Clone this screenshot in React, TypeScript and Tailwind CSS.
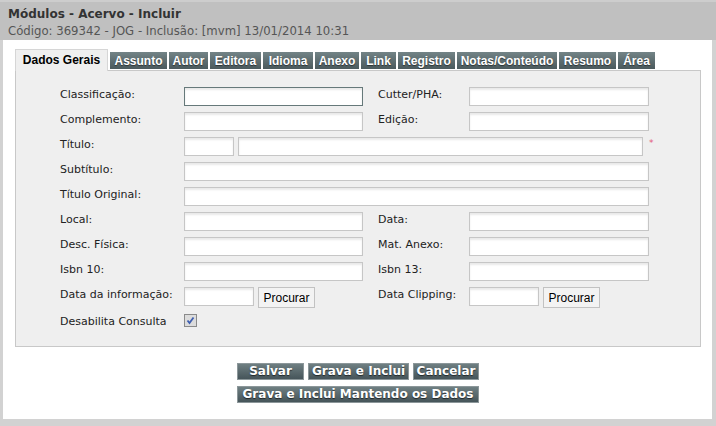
import React from "react";

const tabs = [
  { label: "Assunto", w: "w-[57px]" },
  { label: "Autor", w: "w-[39px]" },
  { label: "Editora", w: "w-[51px]" },
  { label: "Idioma", w: "w-[50px]" },
  { label: "Anexo", w: "w-[44px]" },
  { label: "Link", w: "w-[35px]" },
  { label: "Registro", w: "w-[57px]" },
  { label: "Notas/Conteúdo", w: "w-[100px]" },
  { label: "Resumo", w: "w-[57px]" },
  { label: "Área", w: "w-[37px]" },
];

const inputCls =
  "h-[19px] border bg-white shadow-[inset_0_2px_2px_rgba(0,0,0,0.09)] outline-none";

const Label = ({ children, w = "w-[124px]" }: { children: React.ReactNode; w?: string }) => (
  <span className={`${w} block shrink-0 pt-[1px] leading-[13px] text-[11px] text-[#222]`}>{children}</span>
);

const TwoCol = ({ a, b, focus }: { a: string; b: string; focus?: boolean }) => (
  <div className="flex items-start">
    <Label>{a}</Label>
    <input
      type="text"
      className={`${inputCls} w-[179px] ${focus ? "border-[#66797a]" : "border-[#c6c6c6]"}`}
    />
    <Label w="ml-[15px] w-[91px]">{b}</Label>
    <input type="text" className={`${inputCls} w-[180px] border-[#c6c6c6]`} />
  </div>
);

const FullRow = ({ a }: { a: string }) => (
  <div className="flex items-start">
    <Label>{a}</Label>
    <input type="text" className={`${inputCls} w-[465px] border-[#c6c6c6]`} />
  </div>
);

const Procurar = () => (
  <button className="ml-[4px] h-[21px] w-[57px] shrink-0 border border-[#c2c2c2] bg-[#f3f3f3] font-['Liberation_Sans',Arial,sans-serif] text-[12px] text-black">
    Procurar
  </button>
);

const DarkButton = ({ children, w }: { children: React.ReactNode; w: string }) => (
  <button
    className={`${w} h-[17px] border border-[#8c979a] bg-gradient-to-b from-[#6f7f82] to-[#46555a] text-[12px] font-bold leading-[15px] text-white [text-shadow:0_1px_1px_rgba(0,0,0,0.6)]`}
  >
    {children}
  </button>
);

export default function App() {
  return (
    <div className="flex h-[426px] w-[716px] flex-col bg-[#d2d2d2] font-['DejaVu_Sans',Verdana,sans-serif]">
      {/* Header */}
      <div className="h-[40px] shrink-0 border-t-2 border-[#cdcdcd] bg-[#c0c0c0] px-2 pt-[4px]">
        <div className="text-[12px] font-bold leading-[17px] text-[#333]">Módulos - Acervo - Incluir</div>
        <div className="text-[11.7px] leading-[17px] text-[#555]">
          Código: 369342 - JOG - Inclusão: [mvm] 13/01/2014 10:31
        </div>
      </div>

      {/* Body */}
      <div className="mb-[7px] ml-[3px] mr-[4px] flex-1 bg-white pl-[12px] pt-[9px]">
        {/* Tabs */}
        <div className="flex items-end gap-[2px]">
          <div className="relative z-10 -mb-px flex h-[22px] w-[93px] items-start justify-center border border-b-0 border-[#d6d6d6] bg-[#efefef] pt-[3px] font-['Liberation_Sans',Arial,sans-serif] text-[12px] font-bold leading-[15px] text-black">
            Dados Gerais
          </div>
          {tabs.map((t) => (
            <div
              key={t.label}
              className={`${t.w} mb-px flex h-[17px] items-center justify-center bg-gradient-to-b from-[#738487] to-[#4b5a5d] font-['Liberation_Sans',Arial,sans-serif] text-[12px] font-bold text-white [text-shadow:0_1px_1px_rgba(0,0,0,0.5)]`}
            >
              {t.label}
            </div>
          ))}
        </div>

        {/* Panel */}
        <div className="flex w-[686px] flex-col gap-[6px] border border-[#c8c8c8] bg-[#efefef] pb-[18px] pl-[44px] pt-[16px]">
          <TwoCol a="Classificação:" b="Cutter/PHA:" focus />
          <TwoCol a="Complemento:" b="Edição:" />
          <div className="flex items-start">
            <Label>Título:</Label>
            <input type="text" className={`${inputCls} w-[50px] border-[#c6c6c6]`} />
            <input type="text" className={`${inputCls} ml-[4px] w-[405px] border-[#c6c6c6]`} />
            <span className="ml-[6px] mt-[2px] text-[9px] leading-[9px] text-[#e3577a]">*</span>
          </div>
          <FullRow a="Subtítulo:" />
          <FullRow a="Título Original:" />
          <TwoCol a="Local:" b="Data:" />
          <TwoCol a="Desc. Física:" b="Mat. Anexo:" />
          <TwoCol a="Isbn 10:" b="Isbn 13:" />
          <div className="flex items-start">
            <Label>Data da informação:</Label>
            <input type="text" className={`${inputCls} w-[70px] border-[#c6c6c6]`} />
            <Procurar />
            <Label w="ml-[63px] w-[91px]">Data Clipping:</Label>
            <input type="text" className={`${inputCls} w-[70px] border-[#c6c6c6]`} />
            <Procurar />
          </div>
          <div className="flex items-start">
            <Label>Desabilita Consulta</Label>
            <span className="flex h-[13px] w-[13px] items-center justify-center border border-[#8a8a8a] bg-[#dcdcdc]">
              <svg width="9" height="9" viewBox="0 0 9 9">
                <path d="M1.5 4.5 L3.5 7 L7.5 1.5" fill="none" stroke="#3f5fb0" strokeWidth="1.8" />
              </svg>
            </span>
          </div>
        </div>

        {/* Actions */}
        <div className="mt-[16px] flex w-[686px] flex-col items-center gap-[6px]">
          <div className="flex gap-[4px]">
            <DarkButton w="w-[67px]">Salvar</DarkButton>
            <DarkButton w="w-[101px]">Grava e Inclui</DarkButton>
            <DarkButton w="w-[66px]">Cancelar</DarkButton>
          </div>
          <DarkButton w="w-[242px]">Grava e Inclui Mantendo os Dados</DarkButton>
        </div>
      </div>
    </div>
  );
}
